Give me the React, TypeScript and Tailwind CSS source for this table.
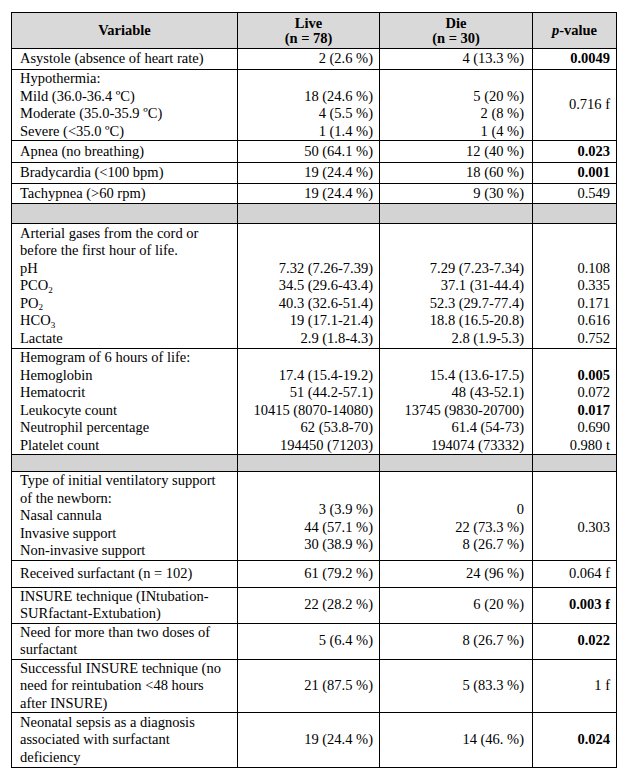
import type { ReactNode } from "react";

type RowData = {
  h: number;
  label?: ReactNode[];
  live?: ReactNode[];
  die?: ReactNode[];
  p?: ReactNode[];
  grey?: boolean;
  valTop?: boolean;
};

const sub = (s: string) => <sub className="text-[9px]">{s}</sub>;

const rows: RowData[] = [
  { h: 21, label: ["Asystole (absence of heart rate)"], live: ["2 (2.6 %)"], die: ["4 (13.3 %)"], p: [<b>0.0049</b>] },
  {
    h: 70,
    label: ["Hypothermia:", "Mild (36.0-36.4 ºC)", "Moderate (35.0-35.9 ºC)", "Severe (<35.0 ºC)"],
    live: ["", "18 (24.6 %)", "4 (5.5 %)", "1 (1.4 %)"],
    die: ["", "5 (20 %)", "2 (8 %)", "1 (4 %)"],
    p: ["0.716 f"],
  },
  { h: 22, label: ["Apnea (no breathing)"], live: ["50 (64.1 %)"], die: ["12 (40 %)"], p: [<b>0.023</b>] },
  { h: 21, label: ["Bradycardia (<100 bpm)"], live: ["19 (24.4 %)"], die: ["18 (60 %)"], p: [<b>0.001</b>] },
  { h: 20, label: ["Tachypnea (>60 rpm)"], live: ["19 (24.4 %)"], die: ["9 (30 %)"], p: ["0.549"] },
  { h: 20, grey: true },
  {
    h: 125,
    label: [
      "Arterial gases from the cord or",
      "before the first hour of life.",
      "pH",
      <>PCO{sub("2")}</>,
      <>PO{sub("2")}</>,
      <>HCO{sub("3")}</>,
      "Lactate",
    ],
    live: ["", "", "7.32 (7.26-7.39)", "34.5 (29.6-43.4)", "40.3 (32.6-51.4)", "19 (17.1-21.4)", "2.9 (1.8-4.3)"],
    die: ["", "", "7.29 (7.23-7.34)", "37.1 (31-44.4)", "52.3 (29.7-77.4)", "18.8 (16.5-20.8)", "2.8 (1.9-5.3)"],
    p: ["", "", "0.108", "0.335", "0.171", "0.616", "0.752"],
  },
  {
    h: 105,
    label: [
      "Hemogram of 6 hours of life:",
      "Hemoglobin",
      "Hematocrit",
      "Leukocyte count",
      "Neutrophil percentage",
      "Platelet count",
    ],
    live: ["", "17.4 (15.4-19.2)", "51 (44.2-57.1)", "10415 (8070-14080)", "62 (53.8-70)", "194450 (71203)"],
    die: ["", "15.4 (13.6-17.5)", "48 (43-52.1)", "13745 (9830-20700)", "61.4 (54-73)", "194074 (73332)"],
    p: ["", <b>0.005</b>, "0.072", <b>0.017</b>, "0.690", "0.980 t"],
  },
  { h: 17, grey: true },
  {
    h: 88,
    label: [
      "Type of initial ventilatory support",
      "of the newborn:",
      "Nasal cannula",
      "Invasive support",
      "Non-invasive support",
    ],
    live: ["3 (3.9 %)", "44 (57.1 %)", "30 (38.9 %)"],
    die: ["0", "22 (73.3 %)", "8 (26.7 %)"],
    p: ["", "0.303", ""],
    valTop: true,
  },
  { h: 27, label: ["Received surfactant (n = 102)"], live: ["61 (79.2 %)"], die: ["24 (96 %)"], p: ["0.064 f"] },
  {
    h: 36,
    label: ["INSURE technique (INtubation-", "SURfactant-Extubation)"],
    live: ["22 (28.2 %)"],
    die: ["6 (20 %)"],
    p: [<b>0.003 f</b>],
  },
  {
    h: 35,
    label: ["Need for more than two doses of", "surfactant"],
    live: ["5 (6.4 %)"],
    die: ["8 (26.7 %)"],
    p: [<b>0.022</b>],
  },
  {
    h: 52,
    label: ["Successful INSURE technique (no", "need for reintubation <48 hours", "after INSURE)"],
    live: ["21 (87.5 %)"],
    die: ["5 (83.3 %)"],
    p: ["1 f"],
  },
  {
    h: 55,
    label: ["Neonatal sepsis as a diagnosis", "associated with surfactant", "deficiency"],
    live: ["19 (24.4 %)"],
    die: ["14 (46. %)"],
    p: [<b>0.024</b>],
  },
];

function Lines({ items }: { items?: ReactNode[] }) {
  return (
    <>
      {(items ?? []).map((t, i) => (
        <div key={i} className="h-[17.5px] whitespace-nowrap">
          {t === "" ? "\u00a0" : t}
        </div>
      ))}
    </>
  );
}

const serif = "font-['Liberation_Serif',serif]";

export default function App() {
  const cell = "border border-black p-0";
  const th = `${cell} ${serif} text-center text-[14.5px] font-bold leading-[14.5px]`;
  return (
    <div className={`min-h-screen bg-white pl-[11px] pt-[12px] ${serif} text-[14.5px] leading-[17.5px] text-black`}>
      <table className={`w-[605px] table-fixed border-collapse ${serif}`}>
        <colgroup>
          <col className="w-[226px]" />
          <col className="w-[142px]" />
          <col className="w-[153px]" />
          <col className="w-[84px]" />
        </colgroup>
        <thead>
          <tr className="h-[36px] bg-[#d9d9d9]">
            <th className={th}>Variable</th>
            <th className={th}>
              Live
              <br />
              (n = 78)
            </th>
            <th className={th}>
              Die
              <br />
              (n = 30)
            </th>
            <th className={th}>
              <i>p</i>-value
            </th>
          </tr>
        </thead>
        <tbody>
          {rows.map((r, i) =>
            r.grey ? (
              <tr key={i} style={{ height: r.h }} className="bg-[#d3d3d3]">
                <td className={cell} />
                <td className={cell} />
                <td className={cell} />
                <td className={cell} />
              </tr>
            ) : (
              <tr key={i} style={{ height: r.h }}>
                <td className={`${cell} pl-[8px] align-middle`}>
                  <Lines items={r.label} />
                </td>
                <td className={`${cell} pr-[6px] text-right ${r.valTop ? "pt-[29px] align-top" : "align-middle"}`}>
                  <Lines items={r.live} />
                </td>
                <td className={`${cell} pr-[8px] text-right ${r.valTop ? "pt-[29px] align-top" : "align-middle"}`}>
                  <Lines items={r.die} />
                </td>
                <td className={`${cell} pr-[6px] text-right ${r.valTop ? "pt-[29px] align-top" : "align-middle"}`}>
                  <Lines items={r.p} />
                </td>
              </tr>
            ),
          )}
        </tbody>
      </table>
    </div>
  );
}
